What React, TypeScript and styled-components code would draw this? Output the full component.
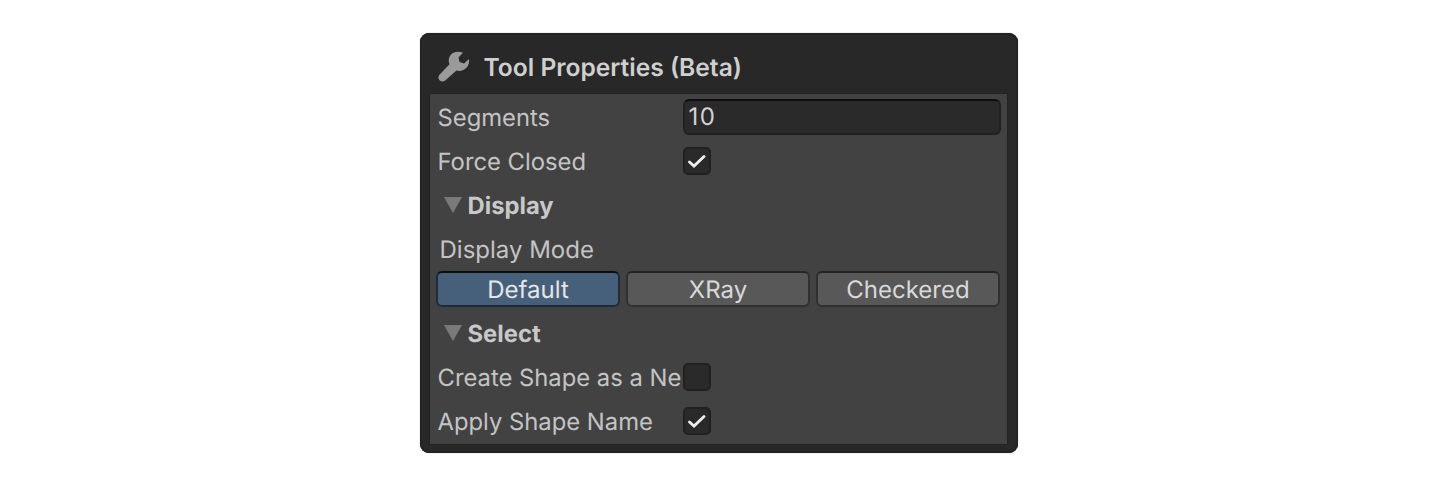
import React from "react";
import styled, { createGlobalStyle } from "styled-components";

const GlobalStyle = createGlobalStyle`
  html, body { margin: 0; padding: 0; background: #fff; }
  body {
    font-family: Inter, "Noto Sans", "Liberation Sans", sans-serif;
    text-rendering: geometricPrecision;
  }
`;

const Page = styled.div`
  width: 1438px;
  height: 486px;
  display: flex;
  justify-content: center;
  padding: 33px 0 0 0;
  box-sizing: border-box;
`;

const Panel = styled.div`
  width: 598px;
  height: 420px;
  box-sizing: border-box;
  margin-left: -1px;
  padding: 0 11px 9px 10px;
  background: #282828;
  border-radius: 9px;
  box-shadow: 0 0 1px 0 rgba(0, 0, 0, 0.6), inset 0 0 0 2px #232323;
  display: flex;
  flex-direction: column;
`;

const Header = styled.div`
  height: 61px;
  flex: none;
  display: flex;
  align-items: center;
  gap: 14px;
  padding-left: 8px;
  padding-top: 6px;
  box-sizing: border-box;
`;

const Title = styled.div`
  font-size: 24.6px;
  font-weight: 600;
  color: #cfcfcf;
  white-space: nowrap;
`;

const Body = styled.div`
  flex: 1;
  background: #424242;
  padding: 5px 6px 0 8px;
  display: flex;
  flex-direction: column;
  gap: 8px;
  box-shadow: 0 0 0 1px #232323;
`;

const Row = styled.div`
  height: 36px;
  flex: none;
  display: grid;
  grid-template-columns: 245px 1fr;
  align-items: center;
`;

const Label = styled.div<{ $nudge?: boolean }>`
  font-size: ${(p) => (p.$nudge ? "24px" : "23.8px")};
  color: #c4c4c4;
  white-space: nowrap;
  padding-left: ${(p) => (p.$nudge ? "2px" : "0")};
`;

const NumberInput = styled.div`
  height: 36px;
  box-sizing: border-box;
  background: #2a2a2a;
  border: 2px solid #212121;
  border-top-color: #0d0d0d;
  border-radius: 6px;
  font-size: 24px;
  letter-spacing: 1.5px;
  color: #d2d2d2;
  line-height: 32px;
  padding-left: 4px;
`;

const CheckBox = styled.div`
  width: 28px;
  height: 28px;
  box-sizing: border-box;
  background: #2a2a2a;
  border: 2px solid #212121;
  border-radius: 5px;
  display: flex;
  align-items: center;
  justify-content: center;
`;

const Foldout = styled.div`
  height: 36px;
  flex: none;
  display: flex;
  align-items: center;
  gap: 6px;
  padding-left: 6px;
`;

const FoldoutTitle = styled.div`
  font-size: 23.8px;
  font-weight: 700;
  color: #c8c8c8;
`;

const ModeBlock = styled.div`
  display: flex;
  flex-direction: column;
  gap: 4px;
`;

const ButtonRow = styled.div`
  display: flex;
  gap: 6px;
  margin-left: -2px;
  height: 36px;
`;

const ModeButton = styled.div<{ $active?: boolean }>`
  width: 184px;
  height: 36px;
  box-sizing: border-box;
  background: ${(p) => (p.$active ? "#46607c" : "#585858")};
  border: 2px solid ${(p) => (p.$active ? "#1f2c38" : "#303030")};
  border-top-color: ${(p) => (p.$active ? "#0d0d0d" : "#242424")};
  border-radius: 6px;
  font-size: 24px;
  line-height: 34px;
  padding-left: 1px;
  text-align: center;
  color: ${(p) => (p.$active ? "#e6e6e6" : "#d8d8d8")};
`;

const WrenchIcon = () => (
  <svg width="32" height="32" viewBox="0 0 32 32">
    <path
      d="M25 1.800C21 0 16 .300 13 3.500C10.500 6.200 10 10 11.500 13.300L1.500 23.800C0 25.400 0 27.500 1.500 29.300C3.200 31 5.600 31 7.200 29.500L18.500 19.500C22 20.500 26 19.500 28.500 16.800C30.800 14.300 31.500 11 31 8L26 12.500L21.500 11L20.500 6.500Z"
      fill="#9a9a9a"
    />
  </svg>
);

const CheckMark = () => (
  <svg width="18" height="18" viewBox="0 0 18 18">
    <path d="M1.500 10L6 14L16 4.500" fill="none" stroke="#eeeeee" strokeWidth="2.800" strokeLinecap="round" />
  </svg>
);

const FoldArrow = () => (
  <svg width="18" height="16" viewBox="0 0 18 16">
    <path d="M0 0h18L9 16z" fill="#7a7a7a" />
  </svg>
);

const modes = ["Default", "XRay", "Checkered"];

export default function App() {
  return (
    <Page>
      <GlobalStyle />
      <Panel>
        <Header>
          <WrenchIcon />
          <Title>Tool Properties (Beta)</Title>
        </Header>
        <Body>
          <Row>
            <Label>Segments</Label>
            <NumberInput>10</NumberInput>
          </Row>
          <Row>
            <Label>Force Closed</Label>
            <CheckBox><CheckMark /></CheckBox>
          </Row>
          <Foldout>
            <FoldArrow />
            <FoldoutTitle>Display</FoldoutTitle>
          </Foldout>
          <ModeBlock>
            <Row>
              <Label $nudge>Display Mode</Label>
            </Row>
            <ButtonRow>
              {modes.map((m, i) => (
                <ModeButton key={m} $active={i === 0}>{m}</ModeButton>
              ))}
            </ButtonRow>
          </ModeBlock>
          <Foldout>
            <FoldArrow />
            <FoldoutTitle>Select</FoldoutTitle>
          </Foldout>
          <Row>
            <Label>Create Shape as a Ne</Label>
            <CheckBox />
          </Row>
          <Row>
            <Label>Apply Shape Name</Label>
            <CheckBox><CheckMark /></CheckBox>
          </Row>
        </Body>
      </Panel>
    </Page>
  );
}
